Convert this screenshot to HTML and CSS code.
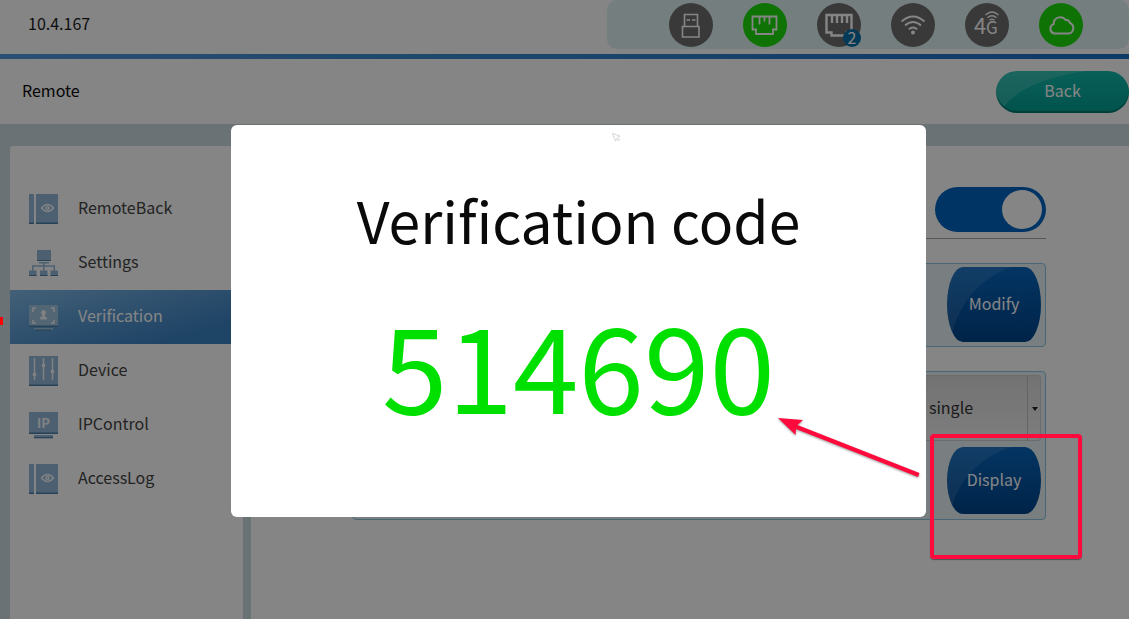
FILE: index.html
```html
<!DOCTYPE html>
<html lang="en">
  <head>
    <meta charset="UTF-8" />
    <meta name="viewport" content="width=device-width, initial-scale=1.0" />
    <title>Remote - Verification</title>
    <link rel="stylesheet" href="styles.css">
  </head>
  <body>
    <header class="topbar">
      <span class="version">10.4.167</span>
      <div class="status">
        <span class="status-icon">
          <svg viewBox="0 0 44 44">
            <path d="M15.500 11.500h13v12h-13zM13.500 23.500h16.500v10.500h-16.500z" stroke-width="1.600" />
            <path d="M17.500 17h3.500M23 17h3.500" stroke-width="1.600" />
          </svg>
        </span>
        <span class="status-icon on">
          <svg viewBox="0 0 44 44">
            <path d="M9.500 13.500h24v13h-3.500v4.500h-17v-4.500H9.500zM16.500 13.500v8M26.500 13.500v8M21.500 13.500v5" stroke-width="1.800" />
          </svg>
        </span>
        <span class="status-icon">
          <svg viewBox="0 0 44 44">
            <path d="M9.500 12h25v17.500h-5v3h-15v-3h-5zM15 12v8M20 12v8M25 12v8M30 12v8" stroke-width="2.400" />
          </svg>
          <span class="badge">2</span>
        </span>
        <span class="status-icon">
          <svg viewBox="0 0 44 44">
            <path d="M10.500 18.500q11.500-10 23 0M14 22.500q8-7 16 0M17.800 26.200q4.200-3.500 8.400 0" stroke-width="1.800" />
            <circle class="dot" cx="22" cy="29.500" r="2" />
          </svg>
        </span>
        <span class="status-icon">
          <svg viewBox="0 0 44 44">
            <text x="9" y="31" font-size="22">4</text>
            <text x="21" y="31" font-size="17">G</text>
            <path d="M20.500 12q6.500-6 13 0M22.500 14.800q4.500-4 9 0M24.500 17.200q2.500-2 5 0" stroke-width="1.300" />
            <circle class="dot" cx="27" cy="18.800" r="1" />
          </svg>
        </span>
        <span class="status-icon on">
          <svg viewBox="0 0 44 44">
            <path d="M15 30.500h14.500a5.500 5.500 0 0 0 1.500-10.500 4 4 0 0 0-4.500-3 6.500 6.500 0 0 0-11.800 4 5 5 0 0 0 .3 9.500z" stroke-width="2" />
          </svg>
        </span>
      </div>
    </header>

    <div class="titlebar">
      <h1>Remote</h1>
      <button type="button" class="back-button">Back</button>
    </div>

    <div class="page">
      <nav class="sidebar">
        <a href="#remoteback">
          <svg viewBox="0 0 30 30">
            <path class="base" d="M0 0h5v30H0zM7 0h22v30H7z" />
            <path class="edge" d="M0 28.500h5V30H0zM7 28.500h22V30H7z" />
            <path class="mark" d="M12.500 14q6-7 12 0q-6 7-12 0z" />
            <circle class="mark" cx="18.500" cy="14" r="1.500" />
          </svg>
          <span>RemoteBack</span>
        </a>
        <a href="#settings">
          <svg viewBox="0 0 30 30">
            <path class="base" d="M8 2h14v11H8zM10 14h10v1.500H10zM0 22.500h7.500V28H0zM11 22.500h7.500V28H11zM21.500 22.500H29V28h-7.500z" />
            <path class="line" d="M14.800 15v8M3.800 23v-5h21.500v5" />
            <path class="edge" d="M8 12h14v1H8zM0 27h7.500v1H0zM11 27h7.500v1H11zM21.500 27H29v1h-7.500z" />
          </svg>
          <span>Settings</span>
        </a>
        <a href="#verification" class="active">
          <svg viewBox="0 0 30 30">
            <path class="base" d="M0 3h29v22H0zM5 26h19v2H5z" />
            <path class="edge" d="M0 23.500h29V25H0zM6 27.500h17v1H6z" />
            <path class="mark" d="M7 6H4v4M22 6h3v4M4 18v3h3M25 18v3h-3" />
            <path class="solid" d="M14.500 8a2.800 2.800 0 0 1 1.300 5l.5 2h1.500v2.500h-6.600V15h1.500l.5-2a2.800 2.800 0 0 1 1.300-5z" />
          </svg>
          <span>Verification</span>
        </a>
        <a href="#device">
          <svg viewBox="0 0 30 30">
            <path class="base" d="M0 0h29v30H0z" />
            <path class="edge" d="M0 28.500h29V30H0z" />
            <path class="mark" d="M5.500 2v22M14.500 2v22M23.500 2v22" />
            <path class="solid" d="M3.800 17h3.400v3H3.800zM12.800 8h3.400v3h-3.400zM21.800 14h3.400v3h-3.400z" />
          </svg>
          <span>Device</span>
        </a>
        <a href="#ipcontrol">
          <svg viewBox="0 0 30 30">
            <path class="base" d="M0 2h29v22H0zM5 25h19v3H5z" />
            <path class="edge" d="M0 22.500h29V24H0zM5 27h19v1.200H5z" />
            <text class="solid" x="14.500" y="17.500" text-anchor="middle" font-size="13" font-weight="700">IP</text>
          </svg>
          <span>IPControl</span>
        </a>
        <a href="#accesslog">
          <svg viewBox="0 0 30 30">
            <path class="base" d="M0 0h5v30H0zM7 0h22v30H7z" />
            <path class="edge" d="M0 28.500h5V30H0zM7 28.500h22V30H7z" />
            <path class="mark" d="M12.500 14q6-7 12 0q-6 7-12 0z" />
            <circle class="mark" cx="18.500" cy="14" r="1.500" />
          </svg>
          <span>AccessLog</span>
        </a>
      </nav>

      <main class="content">
        <div class="switch-row">
          <input type="checkbox" class="switch" aria-label="Enable verification" checked />
        </div>
        <section class="panel">
          <button type="button" class="blue-button">Modify</button>
        </section>
        <section class="panel code-panel">
          <div class="select-box">
            <select aria-label="Code mode">
              <option>single</option>
            </select>
          </div>
          <button type="button" class="blue-button small">Display</button>
        </section>
      </main>
    </div>

    <div class="overlay">
      <div class="dialog" role="dialog" aria-labelledby="dialog-title">
        <h2 id="dialog-title">Verification code</h2>
        <p class="code">514690</p>
      </div>
    </div>

    <!-- Annotations above the dialog -->
    <svg class="cursor" viewBox="0 0 10 10">
      <path d="M.5.500l8.500 3-3 1.500 2.500 2.500-1 1L5 6.500 4 9z" />
    </svg>
    <svg class="arrow" viewBox="0 0 144 62">
      <path d="M1 2l25 2-5.500 5L142.500 57l-1.500 4L19 13l-.500 6z" />
    </svg>
    <div class="highlight"></div>
    <div class="marker"></div>

    <script>
      const dialog = document.querySelector(".overlay");

      document.querySelector(".code-panel .blue-button").addEventListener("click", () => {
        dialog.hidden = false;
      });
    </script>
  </body>
</html>
```
FILE: styles.css
```css
* {
  box-sizing: border-box;
}

body {
  font-family: "Noto Sans CJK SC", "Open Sans", sans-serif;
  margin: 0;
  min-height: 100vh;
  font-size: 16px;
  line-height: 24px;
  color: #2c2c2c;
  background-color: #ffffff;
  display: flex;
  flex-direction: column;
  overflow: hidden;
}

h1,
h2,
p {
  margin: 0;
  font-weight: 400;
}

button,
select {
  font-family: inherit;
  font-size: 16px;
  cursor: pointer;
}

/* Top bar */

.topbar {
  display: flex;
  justify-content: space-between;
  align-items: flex-start;
  height: 59px;
  border-bottom: 5px solid;
  border-image: linear-gradient(90deg, #5099d8, #1a6fc4) 1;
}

.version {
  padding: 11px 28px;
  color: #1c1c1c;
}

.status {
  display: flex;
  gap: 30px;
  padding: 3px 46px 2px 62px;
  border-radius: 10px;
  background-color: #e0f2f4;
}

.status-icon {
  position: relative;
  width: 44px;
  height: 44px;
  border-radius: 50%;
  background-color: #6e6e6e;
}

.status-icon.on {
  background-color: #1cdc08;
}

.status-icon svg {
  display: block;
  fill: none;
  stroke: #ffffff;
}

.status-icon .dot,
.status-icon text {
  fill: #ffffff;
  stroke: none;
}

.badge {
  position: absolute;
  right: 0;
  bottom: 0;
  width: 18px;
  height: 18px;
  border-radius: 50%;
  background-color: #0870a8;
  color: #ffffff;
  font-size: 16px;
  line-height: 16px;
  text-align: center;
}

/* Title bar */

.titlebar {
  display: flex;
  justify-content: space-between;
  align-items: center;
  height: 65px;
  padding-left: 22px;
}

.titlebar h1 {
  padding-bottom: 4px;
  font-size: 16px;
  color: #0a0a0a;
}

.back-button {
  width: 133px;
  height: 42px;
  padding: 0 0 4px;
  border: none;
  border-radius: 21px;
  color: #ffffff;
  background: radial-gradient(94% 126% at 96% 120%, transparent 99%, rgba(255, 255, 255, 0.15) 100%),
    linear-gradient(#12b8aa, #03a094);
  box-shadow: inset 0 -2px 1px #00766c;
}

/* Page */

.page {
  flex: 1;
  display: flex;
  gap: 8px;
  padding: 22px 0 0 10px;
  background-color: #cddae3;
}

.sidebar {
  width: 233px;
  padding-top: 36px;
  background-color: #ffffff;
  border-radius: 3px 3px 0 0;
}

.sidebar a {
  display: flex;
  align-items: center;
  gap: 19px;
  height: 54px;
  padding-left: 19px;
  color: #444444;
  text-decoration: none;
}

.sidebar span {
  padding-bottom: 4px;
}

.sidebar a.active {
  color: #ffffff;
  background: linear-gradient(165deg, #80b8e4, #3b82c4 80%);
}

.sidebar svg {
  width: 30px;
  height: 30px;
}

.base {
  fill: #92b9d8;
}

.edge {
  fill: #4c7fa8;
}

.line {
  fill: none;
  stroke: #92b9d8;
  stroke-width: 1.5;
}

.mark {
  fill: none;
  stroke: #f4f8fb;
  stroke-width: 1.5;
}

.solid {
  fill: #f4f8fb;
}

.active .base {
  fill: #9fc3de;
}

.content {
  flex: 1;
  padding: 41px 83px 0 101px;
  background-color: #ffffff;
}

.switch-row {
  display: flex;
  justify-content: flex-end;
  padding-bottom: 6px;
  border-bottom: 1px solid #a0a8b0;
  margin-bottom: 24px;
}

.switch {
  appearance: none;
  width: 111px;
  height: 45px;
  margin: 0;
  padding: 3px 4px;
  border-radius: 23px;
  background-color: #0064c0;
  display: flex;
  justify-content: flex-end;
  cursor: pointer;
}

.switch::before {
  content: "";
  width: 40px;
  border-radius: 50%;
  background-color: #ffffff;
}

.panel {
  display: flex;
  flex-direction: column;
  align-items: flex-end;
  padding: 3px 4px 4px;
  margin-bottom: 24px;
  border: 1px solid #8fc4e0;
  border-radius: 4px;
  background-color: #e8f4f7;
}

.code-panel {
  gap: 6px;
  padding-bottom: 5px;
}

.blue-button {
  width: 94px;
  height: 75px;
  padding: 0 0 4px;
  border: none;
  border-radius: 16px / 50%;
  color: #ffffff;
  background: radial-gradient(94% 126% at 96% 120%, transparent 99%, rgba(255, 255, 255, 0.1) 100%),
    linear-gradient(#0866be, #00458a);
}

.blue-button.small {
  height: 67px;
  padding-bottom: 3px;
}

.select-box {
  position: relative;
}

.select-box select {
  appearance: none;
  display: block;
  width: 169px;
  height: 66px;
  padding: 0 11px 2px 0;
  border: 1px solid #d0d0d0;
  border-radius: 3px;
  color: #333333;
  text-align-last: center;
  background: linear-gradient(#c0c0c0, #c0c0c0) right 12px top / 1px 100% no-repeat,
    linear-gradient(#dcdcdc, #f0f0f0);
}

.select-box::after {
  content: "";
  position: absolute;
  right: 3px;
  top: 32px;
  border: 3px solid transparent;
  border-top: 4px solid #222222;
  border-bottom: none;
  pointer-events: none;
}

/* Dialog */

.overlay {
  position: fixed;
  inset: 0;
  display: flex;
  justify-content: center;
  align-items: flex-start;
  padding: 125px 0 0 28px;
  background-color: rgba(0, 0, 0, 0.48);
}

.overlay[hidden] {
  display: none;
}

.dialog {
  width: 100%;
  max-width: 695px;
  padding: 58px 20px 90px;
  border-radius: 6px;
  background-color: #ffffff;
  text-align: center;
}

.dialog h2 {
  margin-bottom: 44px;
  font-size: 57px;
  line-height: 72px;
  color: #0a0a0a;
}

.code {
  font-size: 118px;
  line-height: 128px;
  color: #00e000;
}

/* Annotations */

.cursor {
  position: absolute;
  left: 612px;
  top: 133px;
  width: 9px;
  height: 9px;
  fill: none;
  stroke: #d0d0d0;
}

.arrow {
  position: absolute;
  left: 777px;
  top: 416px;
  width: 144px;
  height: 62px;
  fill: #ff0a3c;
  filter: drop-shadow(0 1px 1px rgba(0, 0, 0, 0.4));
}

.highlight {
  position: absolute;
  left: 930px;
  top: 434px;
  width: 152px;
  height: 125px;
  border: 4px solid #ff0a3c;
  border-radius: 4px;
  box-shadow: 0 1px 1px rgba(0, 0, 0, 0.4);
}

.marker {
  position: absolute;
  left: 0;
  top: 317px;
  width: 3px;
  height: 8px;
  background-color: #ff0000;
}
```
